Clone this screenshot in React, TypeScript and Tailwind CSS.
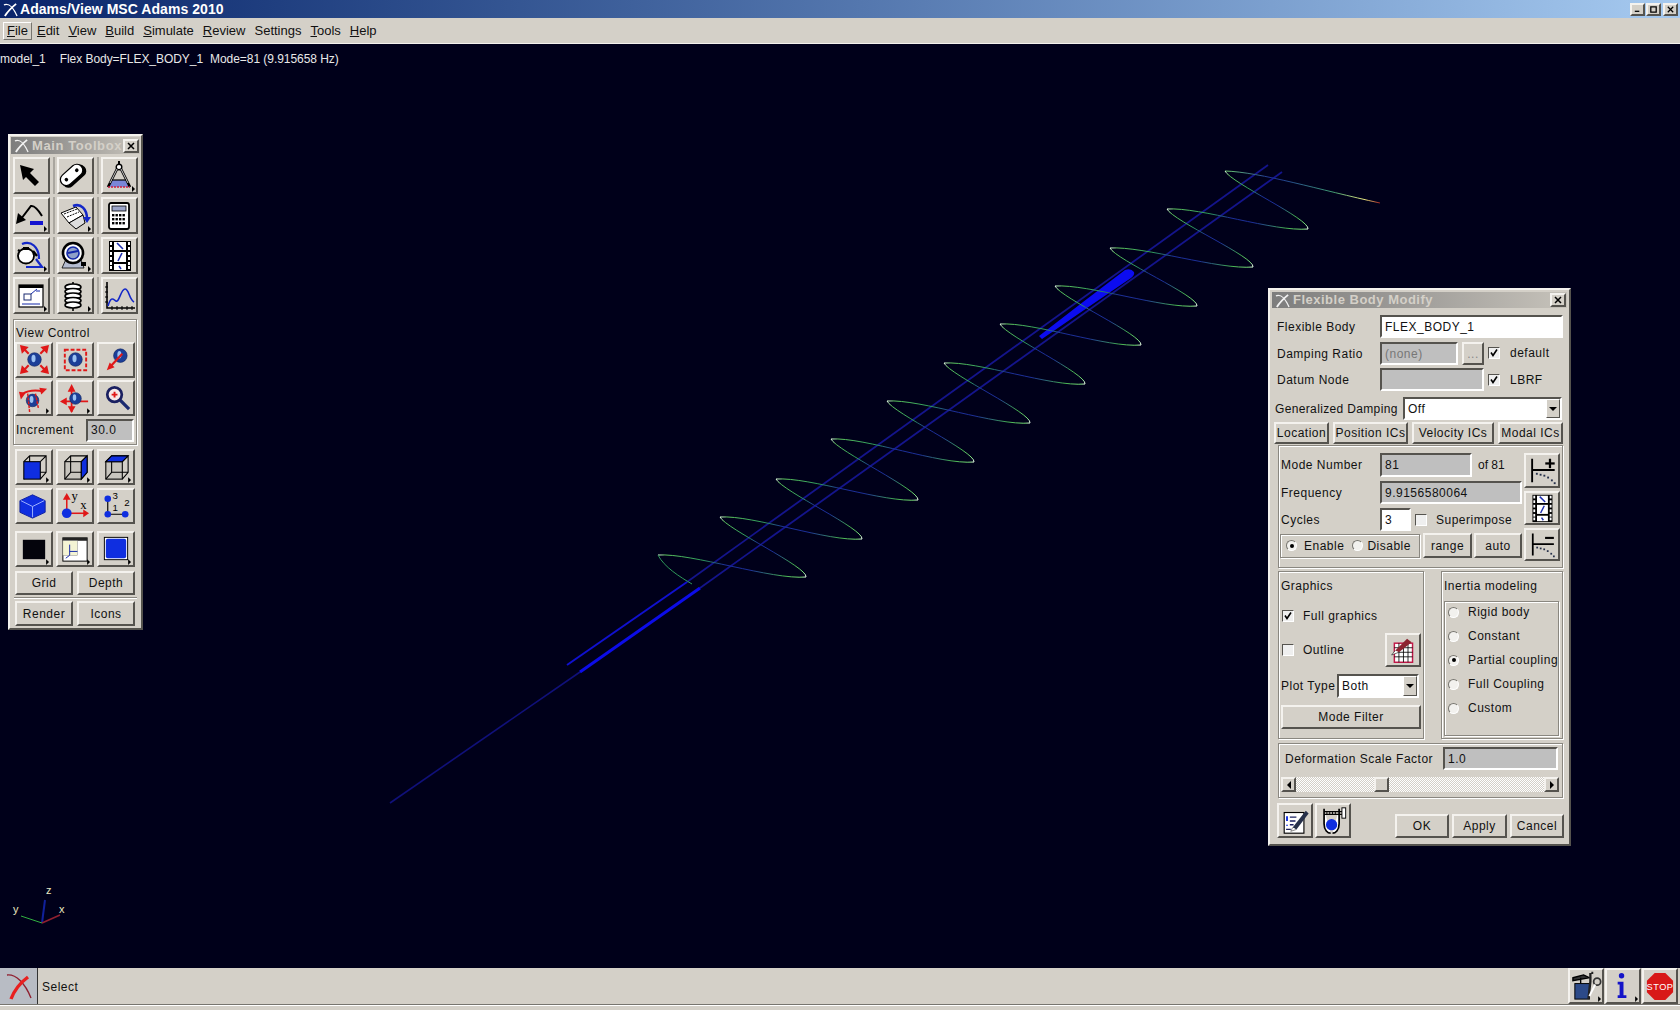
import type { ReactNode } from 'react';

const raised = 'border-2 border-t-[#f4f2ee] border-l-[#f4f2ee] border-b-[#55534e] border-r-[#55534e] bg-[#d4d0c8]';
const sunken = 'border-2 border-t-[#55534e] border-l-[#55534e] border-b-white border-r-white';
const etched = 'border border-[#8a8780] shadow-[inset_1px_1px_0_#fff,1px_1px_0_#fff]';

function Logo({ color = '#fff', size = 16 }: { color?: string; size?: number }) {
  return (
    <svg width={size} height={size} viewBox="0 0 16 16" className="shrink-0">
      <path d="M1 3 C6 1 10 4 15 15" fill="none" stroke={color} strokeWidth="1.4" />
      <path d="M2 15 C5 10 9 6 14 2" fill="none" stroke={color} strokeWidth="2" />
    </svg>
  );
}

const Marker = () => <polygon points="29,27 29,33 32,30" fill="#000" />;

function Sphere({ x = 17, y = 16, r = 7 }: { x?: number; y?: number; r?: number }) {
  return (
    <g>
      <circle cx={x} cy={y} r={r} fill="#1c3f98" stroke="#10235c" strokeWidth="0.6" />
      <ellipse cx={x - 1} cy={y - 1} rx={r * 0.3} ry={r * 0.55} fill="#9cc2f2" />
    </g>
  );
}

function RedArrow({ d, head }: { d: string; head: string }) {
  return (
    <g>
      <path d={d} stroke="#e01818" strokeWidth="2.2" fill="none" />
      <polygon points={head} fill="#e01818" />
    </g>
  );
}

function Film() {
  return (
    <g>
      <rect x="6" y="2" width="22" height="30" fill="#000" />
      {[3, 8, 13, 18, 23, 27].map((y) => (
        <g key={y}>
          <rect x="7" y={y} width="2" height="3" fill="#fff" />
          <rect x="25" y={y} width="2" height="3" fill="#fff" />
        </g>
      ))}
      <rect x="11" y="3" width="12" height="8" fill="#fff" />
      <rect x="11" y="13" width="12" height="10" fill="#fff" />
      <rect x="11" y="25" width="12" height="6" fill="#fff" />
      <path d="M14 4 L20 10 M19 14 L15 22 M16 27 L18 30" stroke="#2030b0" strokeWidth="1.6" fill="none" />
    </g>
  );
}

function CubeFrame({ face }: { face: 'front' | 'right' | 'top' }) {
  return (
    <g fill="none" stroke="#000" strokeWidth="1.1">
      {face !== 'front' && <rect x="6" y="11" width="17" height="18" fill="#c8c5be" stroke="none" />}
      <path d="M6 11 L12 5 L29 5 L29 22 L23 29 M23 11 L29 5 M12 5 L12 22 L29 22 M12 22 L6 29" />
      <rect x="6" y="11" width="17" height="18" fill={face === 'front' ? '#0f2ee0' : 'none'} />
      {face === 'right' && <polygon points="23,11 29,5 29,22 23,29" fill="#0f2ee0" />}
      {face === 'top' && <polygon points="6,11 12,5 29,5 23,11" fill="#0f2ee0" />}
    </g>
  );
}

function ModePlot({ plus }: { plus: boolean }) {
  return (
    <g>
      <path d="M6 4 L6 29 M6 16 L30 16" stroke="#000" strokeWidth="2" fill="none" />
      <path d="M20 9 L30 9" stroke="#000" strokeWidth="2.4" />
      {plus && <path d="M25 4 L25 14" stroke="#000" strokeWidth="2.4" />}
      {[[10, 19], [14, 20], [18, 21], [22, 23], [26, 26], [29, 29]].map(([x, y]) => (
        <rect key={x} x={x} y={y} width="2" height="2" fill="#26304a" />
      ))}
    </g>
  );
}

const icons: Record<string, ReactNode> = {
  arrow: <polygon points="5,6 19,10 15,14 24,23 20,27 11,18 8,21" fill="#000" />,
  link: (
    <g transform="rotate(-42 14 16)">
      <rect x="0" y="11" width="28" height="13" rx="6" fill="#000" />
      <rect x="0" y="9" width="26" height="12" rx="6" fill="#fff" stroke="#000" strokeWidth="1.2" />
      <circle cx="6" cy="15" r="1.8" fill="#000" />
      <circle cx="20" cy="15" r="1.8" fill="#000" />
    </g>
  ),
  compass: (
    <g>
      <polygon points="10,21 22,21 27,28 5,28" fill="#7a86d8" />
      <path d="M16 2 L16 6" stroke="#000" strokeWidth="2" />
      <circle cx="16" cy="8" r="2.8" fill="#fff" stroke="#000" strokeWidth="1.4" />
      <path d="M14 10 L5 28 M18 10 L27 28" stroke="#000" strokeWidth="2.6" fill="none" />
      <path d="M14 10 L7 24 M18 10 L25 24" stroke="#fff" strokeWidth="0.8" fill="none" />
      <path d="M9 21 L23 21" stroke="#000" strokeWidth="1.2" />
      <path d="M5 28 L27 28" stroke="#d02040" strokeWidth="1.4" strokeDasharray="2 1" />
      <Marker />
    </g>
  ),
  undo: (
    <g>
      <path d="M6 20 L16 7 C20 6 24 12 27 17" stroke="#000" strokeWidth="2" fill="none" />
      <polygon points="1,25 3,14 11,21" fill="#000" />
      <rect x="15" y="22" width="13" height="4" fill="#1414d0" />
      <Marker />
    </g>
  ),
  hinge: (
    <g>
      <polygon points="2,14 17,8 24,16 10,24" fill="#fff" stroke="#000" strokeWidth="1" />
      <polygon points="10,24 24,16 26,24 17,30" fill="#ddd" stroke="#000" strokeWidth="1" />
      <path d="M5 15 L18 10 M8 18 L20 13" stroke="#000" strokeDasharray="2 1" />
      <path d="M14 7 C22 4 28 10 28 20" stroke="#1428c8" strokeWidth="2.6" fill="none" />
      <polygon points="24,18 32,18 28,24" fill="#1428c8" />
      <Marker />
    </g>
  ),
  calc: (
    <g>
      <rect x="6" y="4" width="20" height="26" rx="2" fill="#fff" stroke="#000" strokeWidth="1.8" />
      <rect x="9" y="7" width="14" height="5" fill="#9aa4c8" stroke="#000" strokeWidth="0.8" />
      {[15, 19, 23].map((y) =>
        [9, 12.5, 16, 19.5].map((x) => <rect key={`${x}-${y}`} x={x} y={y} width="2.4" height="2.4" fill="#000" />),
      )}
    </g>
  ),
  teapot: (
    <g>
      <path d="M7 5 C16 1 24 8 24 20" stroke="#1428c8" strokeWidth="2.2" fill="none" />
      <path d="M3 11 L8 14 M18 12 L22 17" stroke="#000" strokeWidth="2.4" />
      <ellipse cx="11" cy="17" rx="8" ry="7.5" fill="#fff" stroke="#000" strokeWidth="1.8" />
      <rect x="8" y="8" width="6" height="3" fill="#000" />
      <path d="M11 28 L27 28 L21 20" stroke="#1428c8" strokeWidth="2.2" fill="none" />
      <Marker />
    </g>
  ),
  dial: (
    <g>
      <polygon points="3,29 25,29 21,18 8,18" fill="#b4bcd0" stroke="#000" strokeWidth="0.8" />
      <circle cx="14" cy="14" r="10" fill="#fff" stroke="#000" strokeWidth="2.6" />
      <circle cx="14" cy="14" r="6" fill="#8fa0c8" stroke="#1428a8" strokeWidth="1.6" />
      <path d="M9 14 L19 12" stroke="#1428a8" strokeWidth="2" />
      <rect x="22" y="23" width="5" height="4" fill="#000" />
      <Marker />
    </g>
  ),
  film: <Film />,
  windowDim: (
    <g>
      <rect x="4" y="6" width="24" height="22" fill="#fff" stroke="#000" strokeWidth="1.2" />
      <rect x="4" y="6" width="24" height="3" fill="#000" />
      <rect x="9" y="15" width="7" height="6" fill="none" stroke="#1a2a70" />
      <path d="M16 15 L22 10 M7 25 L25 25 M21 12 L25 12" stroke="#1428a8" />
      <Marker />
    </g>
  ),
  spring: (
    <g fill="#fff" stroke="#000" strokeWidth="1.6">
      <path d="M14 3 L14 8" />
      {[8, 12.5, 17, 21.5, 26].map((y) => (
        <ellipse key={y} cx="14" cy={y} rx="8" ry="3" />
      ))}
      <path d="M14 29 L14 32" />
      <polygon points="29,27 29,33 32,30" fill="#000" stroke="none" />
    </g>
  ),
  plot: (
    <g>
      <path d="M4 3 L4 29 L32 29" stroke="#000" strokeWidth="1.6" fill="none" />
      {[8, 13, 18, 23].map((y) => <path key={y} d={`M2 ${y} L5 ${y}`} stroke="#000" />)}
      {[9, 14, 19, 24, 29].map((x) => <path key={x} d={`M${x} 27 L${x} 31`} stroke="#000" />)}
      <path d="M5 27 C8 17 10 20 13 22 C16 24 18 10 22 10 C26 10 26 20 31 23" stroke="#1428c8" strokeWidth="1.6" fill="none" />
    </g>
  ),
  fit: (
    <g>
      <Sphere />
      <RedArrow d="M11 10 L6 5" head="2,1 11,3 4,10" />
      <RedArrow d="M23 10 L28 5" head="32,1 23,3 30,10" />
      <RedArrow d="M11 22 L6 27" head="2,31 11,29 4,22" />
      <RedArrow d="M23 22 L28 27" head="32,31 23,29 30,22" />
    </g>
  ),
  zoomBox: (
    <g>
      <rect x="6" y="6" width="22" height="21" fill="none" stroke="#e01818" strokeWidth="2" strokeDasharray="4 2" />
      <Sphere y={16} />
    </g>
  ),
  toward: (
    <g>
      <Sphere x={21} y={12} r={7} />
      <RedArrow d="M23 10 L11 23" head="7,27 10,19 15,24" />
    </g>
  ),
  rotate: (
    <g>
      <Sphere x={15} y={19} r={6.5} />
      <path d="M3 14 C8 8 20 8 26 10" stroke="#e01818" strokeWidth="2" fill="none" />
      <polygon points="1,10 8,11 3,18" fill="#e01818" />
      <polygon points="30,7 22,6 24,13" fill="#e01818" />
      <path d="M10 12 L12 31 M18 12 L21 27" stroke="#e01818" strokeWidth="1.5" strokeDasharray="3 1" />
      <Marker />
    </g>
  ),
  pan: (
    <g>
      <path d="M3 20 L30 20 M13 6 L13 31" stroke="#e01818" strokeWidth="1.8" />
      <polygon points="13,2 9,10 17,10" fill="#e01818" />
      <polygon points="13,32 9,25 17,25" fill="#e01818" />
      <polygon points="1,20 8,16 8,24" fill="#e01818" />
      <Sphere x={17} y={17} r={6} />
      <Marker />
    </g>
  ),
  magnify: (
    <g>
      <path d="M20 18 L30 28" stroke="#1a2a70" strokeWidth="3.4" />
      <circle cx="15" cy="13" r="7.5" fill="#f6e8e8" stroke="#1a2060" strokeWidth="2.8" />
      <path d="M12 13 L18 13 M15 10 L15 16" stroke="#e01818" strokeWidth="2" />
    </g>
  ),
  cubeFront: <g><CubeFrame face="front" /><Marker /></g>,
  cubeRight: <g><CubeFrame face="right" /><Marker /></g>,
  cubeTop: <g><CubeFrame face="top" /><Marker /></g>,
  iso: (
    <g>
      <polygon points="15,5 28,11 28,23 15,29 2,23 2,11" fill="#0f2ee0" stroke="#1020a0" />
      <path d="M3 11 L15 17 L27 11 M15 17 L15 28" stroke="#9fb2ff" strokeWidth="1" fill="none" />
    </g>
  ),
  axes: (
    <g>
      <path d="M8 22 L8 8" stroke="#e01818" strokeWidth="1.6" />
      <polygon points="8,3 4,10 12,10" fill="#e01818" />
      <path d="M10 24 L26 24" stroke="#e01818" strokeWidth="1.6" />
      <polygon points="31,24 25,20 25,28" fill="#e01818" />
      <circle cx="8" cy="24" r="5" fill="#0f2ee0" />
      <text x="13" y="10" fontSize="13" fontFamily="Liberation Serif, serif" fill="#000">y</text>
      <text x="22" y="20" fontSize="13" fontFamily="Liberation Serif, serif" fill="#000">x</text>
    </g>
  ),
  points: (
    <g>
      <path d="M8 9 L8 25 L26 25" stroke="#000" strokeWidth="1.2" fill="none" />
      <circle cx="8" cy="9" r="3.4" fill="#0f2ee0" />
      <circle cx="8" cy="25" r="3.4" fill="#0f2ee0" />
      <circle cx="26" cy="25" r="3.4" fill="#0f2ee0" />
      <text x="13" y="9" fontSize="10" fontFamily="Liberation Sans, sans-serif" fill="#000">3</text>
      <text x="13" y="22" fontSize="10" fontFamily="Liberation Sans, sans-serif" fill="#000">1</text>
      <text x="25" y="17" fontSize="10" fontFamily="Liberation Sans, sans-serif" fill="#000">2</text>
    </g>
  ),
  black: (
    <g>
      <rect x="5" y="7" width="23" height="20" fill="#04040c" />
      <Marker />
    </g>
  ),
  winAxes: (
    <g>
      <rect x="4" y="5" width="25" height="24" fill="#fff" stroke="#000" />
      <rect x="4" y="5" width="25" height="3" fill="#222" />
      <rect x="4" y="8" width="15" height="15" fill="#f4f4d4" stroke="#888" strokeWidth="0.5" />
      <path d="M11 12 L11 23 L7 26 M11 19 L19 19" stroke="#1428a8" fill="none" />
      <Marker />
    </g>
  ),
  blue: (
    <g>
      <rect x="4" y="4" width="25" height="24" fill="#000" />
      <rect x="5" y="5" width="23" height="22" fill="#fff" />
      <rect x="6" y="6" width="21" height="20" rx="2" fill="#0f2ee0" />
      <Marker />
    </g>
  ),
  plotPlus: <ModePlot plus />,
  plotMinus: <ModePlot plus={false} />,
  gridPen: (
    <g>
      <rect x="7" y="9" width="20" height="21" fill="#fff" stroke="#c01848" strokeWidth="1.6" />
      <path d="M12 9 L12 30 M17 9 L17 30 M22 9 L22 30 M7 14 L27 14 M7 19 L27 19 M7 24 L27 24" stroke="#000" strokeWidth="0.9" />
      <path d="M8 17 L21 4 L26 8 L12 19 Z" fill="#8c2430" />
      <path d="M8 17 L4 22 L12 19" fill="#fff" stroke="#000" strokeWidth="0.6" />
    </g>
  ),
  notes: (
    <g>
      <rect x="5" y="8" width="21" height="22" fill="#fff" stroke="#000" strokeWidth="1.2" />
      <path d="M8 12 L8 17 M8 21 L8 22" stroke="#0f2ee0" strokeWidth="2" />
      <path d="M11 13 L18 13 M11 17 L17 17 M11 21 L15 21 M7 26 L12 26" stroke="#1a2060" strokeWidth="1.4" />
      <path d="M14 24 L28 6 L31 9 L18 26 Z" fill="#26304a" />
      <path d="M14 24 L12 28 L18 26" fill="#fff" stroke="#000" strokeWidth="0.5" />
    </g>
  ),
  caliper: (
    <g>
      <path d="M7 4 L7 20 C7 27 11 30 14 30 M23 4 L23 20 C23 27 19 30 16 30" stroke="#000" strokeWidth="1.8" fill="#fff" />
      <path d="M7 7 L28 7 M7 10 L28 10" stroke="#000" strokeWidth="1.2" />
      <rect x="26" y="3" width="4" height="11" fill="#fff" stroke="#000" />
      <path d="M10 7 L10 10 M13 7 L13 10 M16 7 L16 10 M19 7 L19 10" stroke="#000" />
      <circle cx="15" cy="21" r="6" fill="#0f2ee0" />
    </g>
  ),
  tools: (
    <g>
      <rect x="5" y="14" width="15" height="16" fill="#2c4a88" stroke="#000" />
      <path d="M3 8 L14 5 L20 8 L3 11 Z M11 8 L11 14" fill="#333" stroke="#000" strokeWidth="1.4" />
      <path d="M21 3 L21 12 L19 30 M22 3 L24 3" stroke="#222" strokeWidth="2.4" fill="none" />
      <circle cx="28" cy="12" r="3.6" fill="none" stroke="#333" strokeWidth="1.8" />
      <path d="M26 15 L20 27" stroke="#fff" strokeWidth="2" />
      <Marker />
    </g>
  ),
  info: (
    <g>
      <circle cx="15" cy="6" r="2.8" fill="#1414c8" />
      <path d="M11 12 L17 12 L17 26 L20 26 L20 29 L11 29 L11 26 L13 26 L13 15 L11 15 Z" fill="#1414c8" />
      <Marker />
    </g>
  ),
  stop: (
    <g>
      <polygon points="11,3 22,3 30,11 30,23 22,31 11,31 3,23 3,11" fill="#d81818" />
      <text x="16.5" y="21" textAnchor="middle" fontSize="9.5" fontFamily="Liberation Sans, sans-serif" fill="#fff">STOP</text>
    </g>
  ),
};

function IconButton({ name, className = 'w-[37px] h-[37px]' }: { name: string; className?: string }) {
  return (
    <div className={`${raised} ${className} flex items-center justify-center shrink-0`}>
      <svg viewBox="0 0 33 33" className="w-full h-full">{icons[name]}</svg>
    </div>
  );
}

function TextButton({ label, className }: { label: string; className: string }) {
  return <div className={`${raised} ${className} flex items-center justify-center shrink-0 whitespace-nowrap`}>{label}</div>;
}

function Input({ value, className, off = true }: { value?: string; className: string; off?: boolean }) {
  return (
    <div className={`${sunken} ${className} ${off ? 'bg-[#bfbfbf]' : 'bg-white'} flex items-center pl-[3px] shrink-0`}>
      {value}
    </div>
  );
}

function Check({ on = false, className = '' }: { on?: boolean; className?: string }) {
  return (
    <div className={`w-[12px] h-[12px] shrink-0 border border-t-[#55534e] border-l-[#55534e] border-b-white border-r-white bg-[#efefef] ${className}`}>
      {on && (
        <svg viewBox="0 0 10 10" className="w-[10px] h-[10px]">
          <path d="M2 4.5 L4 7.5 L8 1.5" stroke="#000" strokeWidth="1.6" fill="none" />
        </svg>
      )}
    </div>
  );
}

function Radio({ on = false }: { on?: boolean }) {
  return (
    <div className="w-[11px] h-[11px] rounded-full shrink-0 bg-[#f2f1ee] border border-t-[#77756f] border-l-[#77756f] border-b-white border-r-white flex items-center justify-center">
      {on && <div className="w-[4px] h-[4px] rounded-full bg-black" />}
    </div>
  );
}

function Select({ value, className }: { value: string; className: string }) {
  return (
    <div className={`${sunken} ${className} bg-white flex items-center pl-[3px] shrink-0`}>
      <span className="flex-1">{value}</span>
      <div className="w-[14px] h-full border border-b-[#55534e] border-r-[#55534e] border-t-white border-l-white bg-[#d4d0c8] flex items-center justify-center">
        <div className="w-0 h-0 border-x-[4px] border-x-transparent border-t-[4px] border-t-black" />
      </div>
    </div>
  );
}

function WindowTitle({ title, small }: { title: string; small?: boolean }) {
  return (
    <div className={`flex items-center bg-linear-to-r from-[#7d7d7d] to-[#c6c2ba] text-[#d4d0c8] font-bold ${small ? 'h-[17px] text-[13px] tracking-[0.6px]' : 'h-[16px] text-[13px] tracking-[0.5px]'}`}>
      <div className="w-[21px] pl-[3px] shrink-0"><Logo color="#f2f2f2" size={15} /></div>
      <span className="whitespace-nowrap flex-1">{title}</span>
      <div className={`${raised} border w-[16px] h-[14px] mr-[1px] flex items-center justify-center shrink-0`}>
        <svg viewBox="0 0 8 8" className="w-[8px] h-[8px]"><path d="M1 1 L7 7 M7 1 L1 7" stroke="#000" strokeWidth="1.5" /></svg>
      </div>
    </div>
  );
}

function ToolRow({ names, last }: { names: string[]; last?: boolean }) {
  return (
    <div className={`flex ${last ? '' : 'mb-[3px]'}`}>
      {names.map((name, i) => (
        <div key={name} className="flex">
          <IconButton name={name} />
          {i < 2 && <div className="w-[7px] flex justify-center"><div className="w-[2px] bg-[#a9a69f]" /></div>}
        </div>
      ))}
    </div>
  );
}

function ViewRow({ names, className = 'h-[36px]' }: { names: string[]; className?: string }) {
  return (
    <div className="flex gap-[3px]">
      {names.map((name) => <IconButton key={name} name={name} className={`w-[38px] ${className}`} />)}
    </div>
  );
}

function MainToolbox() {
  return (
    <div className={`${raised} absolute left-[8px] top-[134px] w-[135px] h-[496px] pt-[1px] px-[1px] flex flex-col`}>
      <WindowTitle title="Main Toolbox" small />
      <div className="pl-[2px] pt-[3px]">
        <ToolRow names={['arrow', 'link', 'compass']} />
        <ToolRow names={['undo', 'hinge', 'calc']} />
        <ToolRow names={['teapot', 'dial', 'film']} />
        <ToolRow names={['windowDim', 'spring', 'plot']} last />
      </div>
      <div className={`${etched} ml-[2px] mr-[3px] mt-[5px] h-[126px] pl-[1px]`}>
        <div className="h-[22px] flex items-center pl-[1px] pt-[3px]">View Control</div>
        <ViewRow names={['fit', 'zoomBox', 'toward']} />
        <div className="h-[2px]" />
        <ViewRow names={['rotate', 'pan', 'magnify']} />
        <div className="flex items-center h-[26px] pl-[1px] mt-[1px]">
          <span className="w-[70px]">Increment</span>
          <Input value="30.0" className="w-[48px] h-[23px]" />
        </div>
      </div>
      <div className="pl-[4px] mt-[4px]">
        <ViewRow names={['cubeFront', 'cubeRight', 'cubeTop']} />
        <div className="h-[3px]" />
        <ViewRow names={['iso', 'axes', 'points']} />
        <div className="h-[7px]" />
        <ViewRow names={['black', 'winAxes', 'blue']} />
      </div>
      <div className="flex gap-[4px] pl-[4px] mt-[4px]">
        <TextButton label="Grid" className="w-[58px] h-[24px]" />
        <TextButton label="Depth" className="w-[58px] h-[24px]" />
      </div>
      <div className="border-t border-t-[#8a8780] border-b border-b-white mx-[3px] mt-[2px] h-[2px]" />
      <div className="flex gap-[4px] pl-[4px] mt-[2px]">
        <TextButton label="Render" className="w-[58px] h-[25px]" />
        <TextButton label="Icons" className="w-[58px] h-[25px]" />
      </div>
    </div>
  );
}

function FlexWindow() {
  return (
    <div className={`${raised} absolute left-[1268px] top-[288px] w-[303px] h-[558px] pt-[2px] flex flex-col`}>
      <div className="mx-[2px]"><WindowTitle title="Flexible Body Modify" /></div>

      <div className="flex items-center h-[23px] mt-[7px] pl-[7px]">
        <span className="w-[103px]">Flexible Body</span>
        <Input value="FLEX_BODY_1" off={false} className="w-[183px] h-[23px]" />
      </div>
      <div className="flex items-center h-[23px] mt-[4px] pl-[7px]">
        <span className="w-[103px]">Damping Ratio</span>
        <Input value="(none)" className="w-[78px] h-[23px] text-[#777]" />
        <TextButton label="..." className="w-[22px] h-[23px] ml-[4px] text-[#888]" />
        <Check on className="ml-[4px] -mt-[2px]" />
        <span className="ml-[10px] -mt-[2px]">default</span>
      </div>
      <div className="flex items-center h-[23px] mt-[3px] pl-[7px]">
        <span className="w-[103px]">Datum Node</span>
        <Input className="w-[104px] h-[23px]" />
        <Check on className="ml-[4px]" />
        <span className="ml-[10px]">LBRF</span>
      </div>
      <div className="flex items-center h-[23px] mt-[6px] pl-[5px]">
        <span className="w-[128px] whitespace-nowrap tracking-[0.35px]">Generalized Damping</span>
        <Select value="Off" className="w-[159px] h-[23px]" />
      </div>
      <div className="flex gap-[4px] mt-[2px] pl-[4px]">
        <TextButton label="Location" className="w-[55px] h-[22px]" />
        <TextButton label="Position ICs" className="w-[75px] h-[22px]" />
        <TextButton label="Velocity ICs" className="w-[82px] h-[22px]" />
        <TextButton label="Modal ICs" className="w-[65px] h-[22px]" />
      </div>

      <div className={`${etched} ml-[8px] mt-[1px] w-[285px] h-[123px] flex`}>
        <div className="w-[245px] pl-[2px] pt-[7px] shrink-0">
          <div className="flex items-center h-[24px]">
            <span className="w-[99px]">Mode Number</span>
            <Input value="81" className="w-[92px] h-[24px]" />
            <span className="ml-[6px] tracking-normal">of 81</span>
          </div>
          <div className="flex items-center h-[23px] mt-[4px]">
            <span className="w-[99px]">Frequency</span>
            <Input value="9.9156580064" className="w-[142px] h-[23px]" />
          </div>
          <div className="flex items-center h-[23px] mt-[4px]">
            <span className="w-[99px]">Cycles</span>
            <Input value="3" off={false} className="w-[31px] h-[23px]" />
            <Check className="ml-[4px]" />
            <span className="ml-[9px]">Superimpose</span>
          </div>
          <div className="flex items-center h-[25px] mt-[2px] -ml-[1px]">
            <div className={`${etched} w-[140px] h-[24px] flex items-center pl-[5px] shrink-0`}>
              <Radio on />
              <span className="ml-[7px]">Enable</span>
              <div className="ml-[8px]"><Radio /></div>
              <span className="ml-[4px]">Disable</span>
            </div>
            <TextButton label="range" className="w-[49px] h-[25px] ml-[3px]" />
            <TextButton label="auto" className="w-[48px] h-[25px] ml-[2px]" />
          </div>
        </div>
        <div className="pt-[7px] flex flex-col gap-[3px]">
          <IconButton name="plotPlus" className="w-[36px] h-[35px]" />
          <IconButton name="film" className="w-[36px] h-[34px]" />
          <IconButton name="plotMinus" className="w-[36px] h-[33px]" />
        </div>
      </div>

      <div className="flex ml-[8px] mt-[3px] gap-[17px]">
        <div className={`${etched} w-[146px] h-[168px] pl-[2px] pt-[6px]`}>
          <div className="h-[16px] flex items-center">Graphics</div>
          <div className="flex items-center h-[16px] mt-[14px] pl-[1px]">
            <Check on />
            <span className="ml-[9px]">Full graphics</span>
          </div>
          <div className="flex items-center h-[34px] mt-[9px] pl-[1px]">
            <Check />
            <span className="ml-[9px]">Outline</span>
            <IconButton name="gridPen" className="w-[36px] h-[34px] ml-auto mr-[2px]" />
          </div>
          <div className="flex items-center h-[24px] mt-[7px]">
            <span className="w-[56px] whitespace-nowrap">Plot Type</span>
            <Select value="Both" className="w-[82px] h-[24px]" />
          </div>
          <TextButton label="Mode Filter" className="w-[140px] h-[24px] mt-[7px]" />
        </div>
        <div className={`${etched} w-[122px] h-[168px] pl-[2px] pt-[6px]`}>
          <div className="h-[16px] flex items-center">Inertia modeling</div>
          <div className={`${etched} w-[115px] h-[135px] mt-[7px] pl-[3px]`}>
            <div className="flex flex-col -mt-[2px]">
              {['Rigid body', 'Constant', 'Partial coupling', 'Full Coupling', 'Custom'].map((label) => (
                <div key={label} className="flex items-center h-[24px] whitespace-nowrap">
                  <Radio on={label === 'Partial coupling'} />
                  <span className="ml-[9px]">{label}</span>
                </div>
              ))}
            </div>
          </div>
        </div>
      </div>

      <div className={`${etched} ml-[8px] mt-[4px] w-[285px] h-[55px] pl-[2px] pt-[3px]`}>
        <div className="flex items-center h-[23px]">
          <span className="w-[162px] pl-[4px] whitespace-nowrap">Deformation Scale Factor</span>
          <Input value="1.0" className="w-[115px] h-[23px]" />
        </div>
        <div className="flex h-[15px] w-[278px] mt-[7px] bg-[repeating-conic-gradient(#d4d0c8_0_25%,#ffffff_0_50%)] bg-size-[2px_2px]">
          <div className={`${raised} border w-[15px] flex items-center justify-center shrink-0`}>
            <div className="w-0 h-0 border-y-[4px] border-y-transparent border-r-[4px] border-r-black" />
          </div>
          <div className="w-[78px] shrink-0" />
          <div className={`${raised} border w-[15px] shrink-0`} />
          <div className="flex-1" />
          <div className={`${raised} border w-[15px] flex items-center justify-center shrink-0`}>
            <div className="w-0 h-0 border-y-[4px] border-y-transparent border-l-[4px] border-l-black" />
          </div>
        </div>
      </div>

      <div className="flex items-end ml-[7px] mt-[5px] h-[35px]">
        <IconButton name="notes" className="w-[36px] h-[35px]" />
        <IconButton name="caliper" className="w-[36px] h-[35px] ml-[2px]" />
        <TextButton label="OK" className="w-[54px] h-[24px] ml-[44px]" />
        <TextButton label="Apply" className="w-[55px] h-[24px] ml-[3px]" />
        <TextButton label="Cancel" className="w-[54px] h-[24px] ml-[3px]" />
      </div>
    </div>
  );
}

// loop tips of the mode shape, read off the picture
const leftTips = [[1225, 171], [1167, 209], [1110, 248], [1055, 286], [1000, 324], [944, 363], [887, 401], [831, 439], [776, 479], [720, 517], [658, 555]];
const rightTips = [[1308, 229], [1253, 267], [1197, 306], [1141, 345], [1085, 384], [1030, 423], [974, 462], [918, 500], [862, 539], [806, 577]];

function Scene() {
  return (
    <svg viewBox="0 44 1680 924" className="absolute inset-0 w-full h-full">
      <defs>
        <linearGradient id="wave">
          <stop offset="0" stopColor="#e8ffe8" />
          <stop offset="0.05" stopColor="#5fc85f" />
          <stop offset="0.3" stopColor="#2f9a5a" />
          <stop offset="0.45" stopColor="#1c2f98" />
          <stop offset="0.62" stopColor="#1c2f98" />
          <stop offset="0.85" stopColor="#45b050" />
          <stop offset="0.97" stopColor="#7ae07a" />
          <stop offset="1" stopColor="#f0fff0" />
        </linearGradient>
        <linearGradient id="tail">
          <stop offset="0" stopColor="#6fd06f" />
          <stop offset="0.3" stopColor="#1c2f98" />
          <stop offset="0.7" stopColor="#3f9a70" />
          <stop offset="0.9" stopColor="#e8e880" />
          <stop offset="1" stopColor="#a02020" />
        </linearGradient>
      </defs>
      <path d="M390 803 L580 672" stroke="#10107a" strokeWidth="1.6" />
      <path d="M700 588 L1282 172" stroke="#14148c" strokeWidth="1.8" />
      <path d="M687 582 L1268 165" stroke="#14148c" strokeWidth="1.8" />
      <path d="M567 665 L687 582" stroke="#1010d0" strokeWidth="2" />
      <path d="M580 672 L700 588" stroke="#0c0ce8" strokeWidth="3" />
      <path d="M1039 336 L1083 302 L1125 270 Q1131 268 1134 272 Q1135 275 1131 278 L1087 308 L1042 339 Z" fill="#0c0cf0" />
      <path d="M1225 171 C1260 172 1320 190 1380 203" fill="none" stroke="url(#tail)" />
      {rightTips.map(([rx, ry], i) => {
        const [ax, ay] = leftTips[i + 1];
        const [bx, by] = leftTips[i];
        return (
          <g key={rx} fill="none" stroke="url(#wave)">
            <path d={`M${ax} ${ay} C${ax + 34} ${ay - 2} ${rx - 34} ${ry + 3} ${rx} ${ry}`} />
            <path d={`M${bx} ${by} C${bx + 6} ${by + 12} ${rx + 2} ${ry - 10} ${rx} ${ry}`} />
          </g>
        );
      })}
      <path d="M658 555 C664 567 680 577 692 584" fill="none" stroke="#2f9a5a" />
      <path d="M42 923 L45 900" stroke="#10209a" strokeWidth="2" />
      <path d="M42 923 L21 916" stroke="#30b040" />
      <path d="M42 923 L60 915" stroke="#902030" strokeWidth="1.4" />
    </svg>
  );
}

export default function App() {
  const menus = ['File', 'Edit', 'View', 'Build', 'Simulate', 'Review', 'Settings', 'Tools', 'Help'];
  return (
    <div className="relative w-[1680px] h-[1010px] overflow-hidden flex flex-col bg-[#00001a] font-['Liberation_Sans',sans-serif] text-[12px] tracking-[0.5px] text-[#111]">
      <div className="h-[18px] flex items-center bg-linear-to-r from-[#0a246a] to-[#a6caf0] text-white font-bold text-[14px] tracking-[0.05px] shrink-0">
        <div className="w-[20px] pl-[3px]"><Logo size={15} /></div>
        <span>Adams/View MSC Adams 2010</span>
        <div className="ml-auto flex mr-[2px] gap-[1px]">
          {['M2 7 L7 7', 'M2 2 L8 2 L8 8 L2 8 Z', 'M2 2 L8 8 M8 2 L2 8'].map((d, i) => (
            <div key={d} className={`${raised} border w-[15px] h-[13px] ${i === 2 ? 'ml-[1px]' : ''} flex items-center justify-center`}>
              <svg viewBox="0 0 10 10" className="w-[9px] h-[9px]"><path d={d} stroke="#000" strokeWidth="1.4" fill="none" /></svg>
            </div>
          ))}
        </div>
      </div>
      <div className="h-[26px] flex items-center bg-[#d4d0c8] pl-[3px] shrink-0 border-b border-b-[#f4f2ee] text-[13px] tracking-normal">
        {menus.map((name, i) => (
          <div key={name} className={i === 0 ? 'border border-t-white border-l-white border-b-[#77756f] border-r-[#77756f] h-[18px] px-[3px] flex items-center' : 'px-[3px] ml-[2px] mr-[1px]'}>
            {name === 'Settings' ? name : <><u>{name[0]}</u>{name.slice(1)}</>}
          </div>
        ))}
      </div>

      <div className="relative flex-1 bg-[#00001a] text-[#e8e8e8]">
        <Scene />
        <div className="relative h-[30px] flex items-center whitespace-nowrap text-[12px] tracking-[-0.05px]">
          <span>model_1</span>
          <span className="ml-[14px]">Flex Body=FLEX_BODY_1</span>
          <span className="ml-[7px]">Mode=81 (9.915658 Hz)</span>
        </div>
        <span className="absolute left-[46px] top-[838px] text-[11px] text-[#e8e8c0]">z</span>
        <span className="absolute left-[13px] top-[857px] text-[11px] text-[#e8e8c0]">y</span>
        <span className="absolute left-[59px] top-[857px] text-[11px] text-[#e8e8c0]">x</span>
      </div>

      <div className="h-[42px] bg-[#d4d0c8] flex flex-col shrink-0">
        <div className="h-[37px] flex items-center border-b border-b-[#77756f]">
          <div className="w-[38px] h-full bg-[#b8bcc4] border-r border-r-[#333] flex items-center justify-center shrink-0">
            <svg viewBox="0 0 30 30" className="w-[30px] h-[30px]">
              <path d="M3 4 C12 3 21 12 27 27" fill="none" stroke="#902030" strokeWidth="1.4" />
              <path d="M7 28 C10 20 16 12 24 6" fill="none" stroke="#e82020" strokeWidth="3.4" />
            </svg>
          </div>
          <span className="ml-[4px] pt-[2px]">Select</span>
          <div className="ml-auto flex mr-[2px]">
            <IconButton name="tools" className="w-[36px] h-[36px]" />
            <IconButton name="info" className="w-[36px] h-[36px] ml-[1px]" />
            <IconButton name="stop" className="w-[36px] h-[36px] ml-[1px]" />
          </div>
        </div>
        <div className="border-t border-t-white flex-1" />
      </div>

      <MainToolbox />
      <FlexWindow />
    </div>
  );
}
